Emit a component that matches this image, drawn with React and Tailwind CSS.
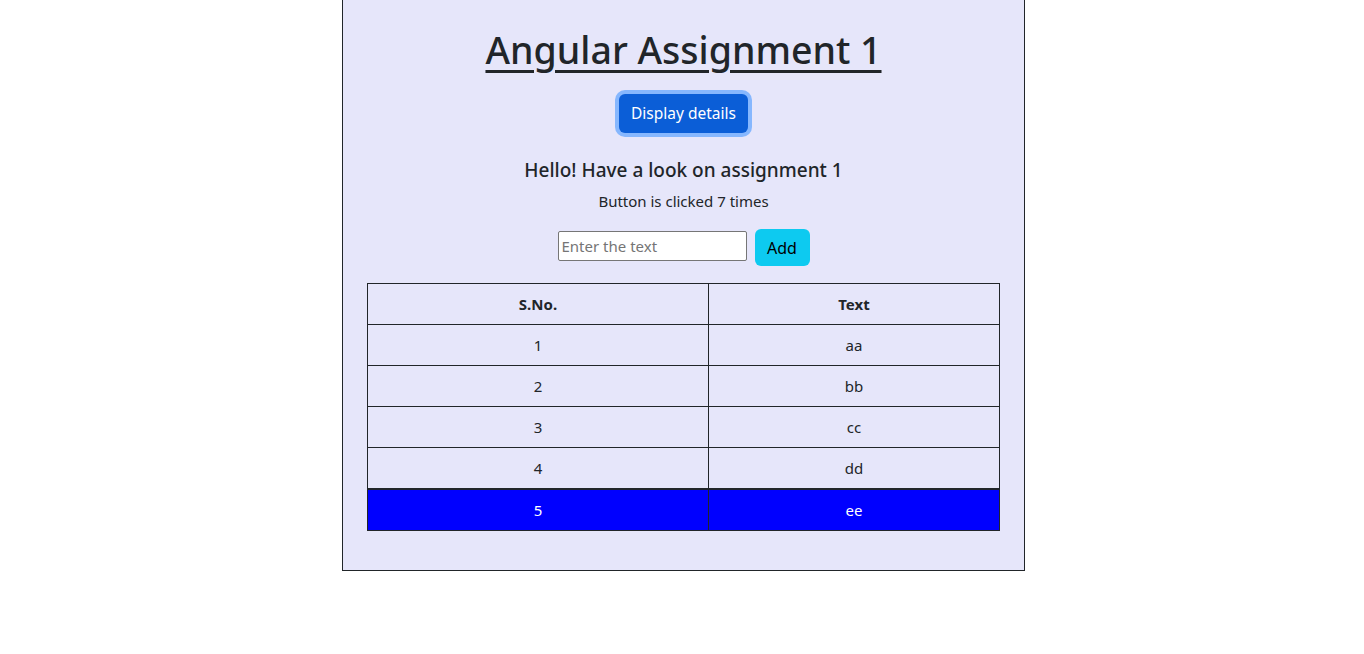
export default function App() {
  const rows = [
    [1, "aa"],
    [2, "bb"],
    [3, "cc"],
    [4, "dd"],
  ];
  return (
    <div className="min-h-screen bg-white" style={{ fontFamily: '"Noto Sans", "Open Sans", sans-serif' }}>
      <div className="ml-[342px] w-[683px] bg-[#e6e6fa] border-x border-b border-[#212529] px-[24px] pb-[39px] text-[#212529]">
        <h1 className="pt-[26px] text-center text-[37.5px] leading-[48px] font-medium underline decoration-[3px] underline-offset-[6px]">
          Angular Assignment 1
        </h1>
        <div className="mt-[20px] flex justify-center">
          <button className="h-[39px] w-[129px] rounded-[6px] bg-[#0b5ed7] text-white text-[15.5px] ring-4 ring-[#86b7fe]">
            Display details
          </button>
        </div>
        <h5 className="mt-[25px] text-center text-[19px] leading-[24px] font-medium">
          Hello! Have a look on assignment 1
        </h5>
        <p className="mt-[7px] text-center text-[15px] leading-[24px]">Button is clicked 7 times</p>
        <div className="mt-[16px] flex justify-center items-start gap-[8px]">
          <input
            placeholder="Enter the text"
            className="mt-[2px] h-[30px] w-[189px] bg-white border border-[#767676] rounded-[2px] px-[3px] text-[15px] placeholder:text-[#757575] outline-none"
          />
          <button className="h-[37px] w-[55px] rounded-[6px] bg-[#0dcaf0] text-black text-[16px]">Add</button>
        </div>
        <table className="mt-[17px] w-[633px] border-collapse text-center text-[15px]">
          <thead>
            <tr className="h-[41px]">
              <th className="w-[341px] border border-[#212529] font-bold">S.No.</th>
              <th className="border border-[#212529] font-bold">Text</th>
            </tr>
          </thead>
          <tbody>
            {rows.map(([n, t]) => (
              <tr key={n} className="h-[41px]">
                <td className="border border-[#212529]">{n}</td>
                <td className="border border-[#212529]">{t}</td>
              </tr>
            ))}
            <tr className="h-[42px] bg-[#0000ff] text-white">
              <td className="border border-[#212529] border-t-2">5</td>
              <td className="border border-[#212529] border-t-2">ee</td>
            </tr>
          </tbody>
        </table>
      </div>
    </div>
  );
}
